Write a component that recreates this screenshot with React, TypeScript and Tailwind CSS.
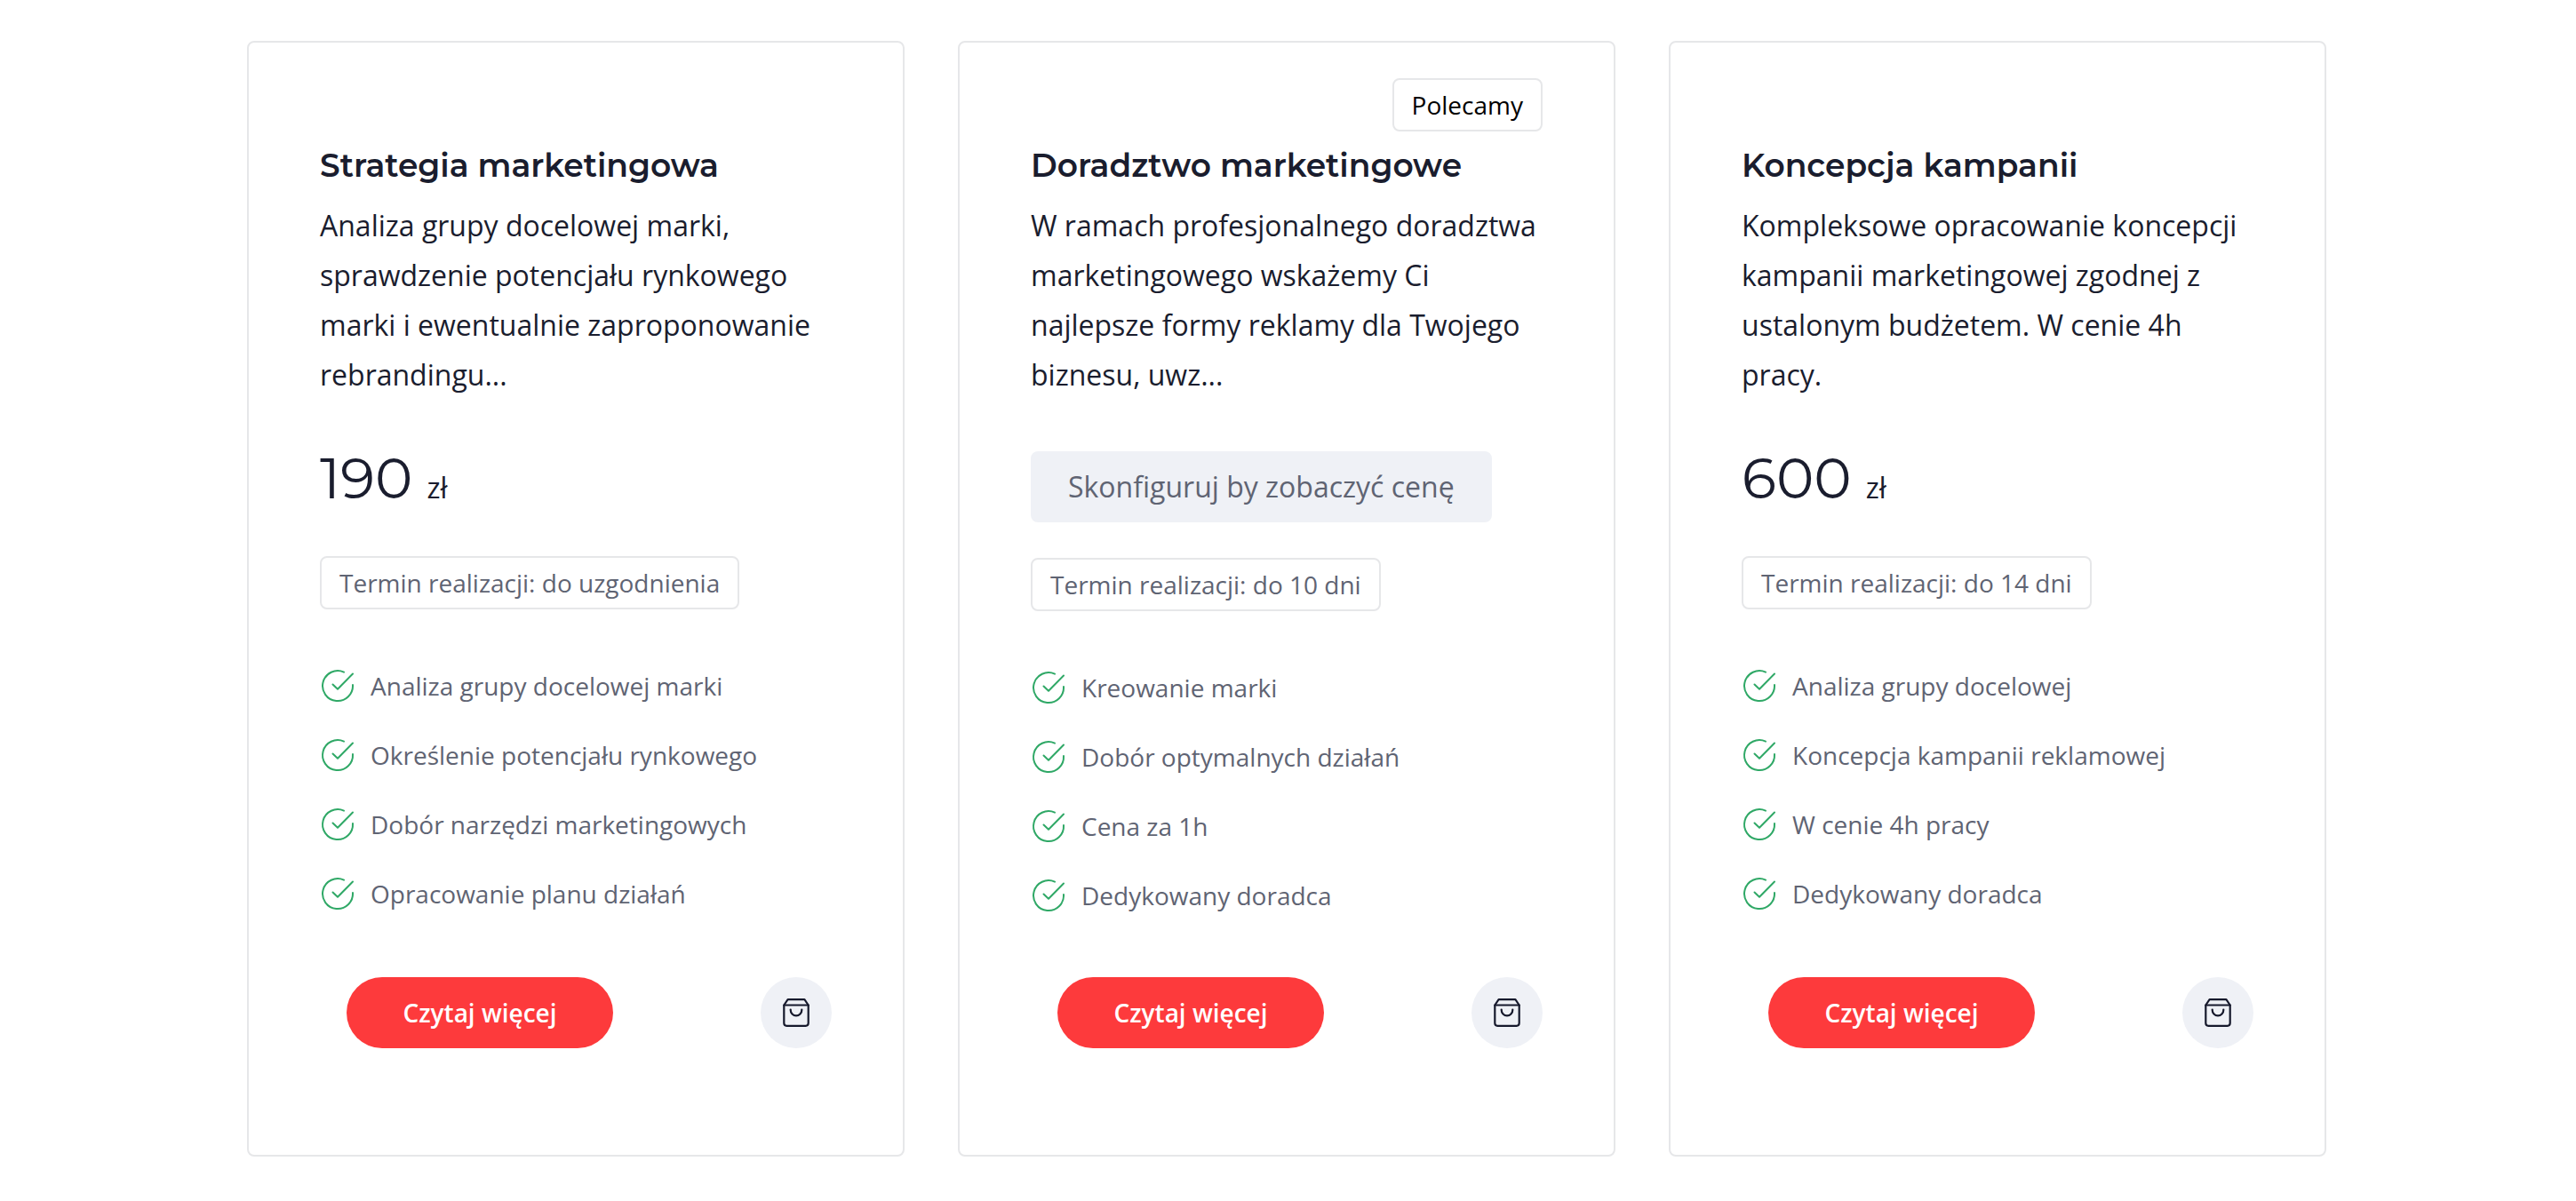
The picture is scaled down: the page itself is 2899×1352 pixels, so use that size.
type Service = {
  title: string;
  description: string;
  price?: string;
  term: string;
  features: string[];
  recommended?: boolean;
};

const services: Service[] = [
  {
    title: 'Strategia marketingowa',
    description:
      'Analiza grupy docelowej marki, sprawdzenie potencjału rynkowego marki i ewentualnie zaproponowanie rebrandingu...',
    price: '190',
    term: 'do uzgodnienia',
    features: [
      'Analiza grupy docelowej marki',
      'Określenie potencjału rynkowego',
      'Dobór narzędzi marketingowych',
      'Opracowanie planu działań',
    ],
  },
  {
    title: 'Doradztwo marketingowe',
    description:
      'W ramach profesjonalnego doradztwa marketingowego wskażemy Ci najlepsze formy reklamy dla Twojego biznesu, uwz...',
    term: 'do 10 dni',
    features: ['Kreowanie marki', 'Dobór optymalnych działań', 'Cena za 1h', 'Dedykowany doradca'],
    recommended: true,
  },
  {
    title: 'Koncepcja kampanii',
    description:
      'Kompleksowe opracowanie koncepcji kampanii marketingowej zgodnej z ustalonym budżetem. W cenie 4h pracy.',
    price: '600',
    term: 'do 14 dni',
    features: [
      'Analiza grupy docelowej',
      'Koncepcja kampanii reklamowej',
      'W cenie 4h pracy',
      'Dedykowany doradca',
    ],
  },
];

function CheckIcon() {
  return (
    <svg
      viewBox="0 0 40 40"
      className="size-10 shrink-0 fill-none stroke-[#2fa866] stroke-2"
      strokeLinecap="round"
      strokeLinejoin="round"
      aria-hidden="true"
    >
      <path d="M27 4.6A17 17 0 1 0 37 19" />
      <path d="M14.5 18.5 20 23.7 37 6.5" />
    </svg>
  );
}

function BagIcon() {
  return (
    <svg
      viewBox="0 0 32 32"
      className="size-8 fill-none stroke-[#16192c] stroke-[2.2]"
      strokeLinecap="round"
      strokeLinejoin="round"
      aria-hidden="true"
    >
      <path d="M2.3 7.5 6.6 1.2h18.8l4.3 6.3V27.8a3 3 0 0 1-3 3H5.3a3 3 0 0 1-3-3z" />
      <path d="M2.3 7.5h27.4" />
      <path d="M9.7 12.5v.6a6.3 6.3 0 0 0 12.6 0v-.6" />
    </svg>
  );
}

function ServiceCard({ service }: { service: Service }) {
  return (
    <article className="relative flex flex-col items-start rounded-lg border-2 border-[#e6e7e9] px-20 pt-[114px] pb-[120px]">
      {service.recommended && (
        <span className="absolute top-10 right-20 rounded-lg border-2 border-[#e6e7e9] px-5 py-2 text-[28px] leading-10 text-black">
          Polecamy
        </span>
      )}
      <h2 className="font-[Montserrat,Inter,sans-serif] text-[36px] leading-12 font-semibold text-[#1a1d2e]">
        {service.title}
      </h2>
      <p className="mt-4 text-[32px] leading-14 text-[#1a1d2e]">{service.description}</p>
      <div className="mt-[58px] flex min-h-[78px]">
        {service.price ? (
          <p className="flex items-baseline gap-4 text-[#1a1d2e]">
            <span className="font-[Montserrat,Inter,sans-serif] text-[64px] leading-15">
              {service.price}
            </span>
            <span className="text-[32px]">zł</span>
          </p>
        ) : (
          <button
            type="button"
            className="rounded-lg border-2 border-[#eff1f6] bg-[#eff1f6] px-10 py-4 text-[32px] leading-11 text-[#5f6473]"
          >
            Skonfiguruj by zobaczyć cenę
          </button>
        )}
      </div>
      <p className="mt-10 rounded-lg border-2 border-[#e6e7e9] px-5 py-2 text-[28px] leading-10 text-[#5f6473]">
        Termin realizacji: {service.term}
      </p>
      <ul className="mt-[66px] mb-[72px] flex flex-col gap-[38px]">
        {service.features.map((feature) => (
          <li key={feature} className="flex items-center gap-[17px] text-[28px] leading-10 text-[#5f6473]">
            <CheckIcon />
            {feature}
          </li>
        ))}
      </ul>
      <div className="mt-auto flex w-full items-center justify-between pl-[30px]">
        <a
          href="#"
          className="flex h-20 w-[300px] items-center justify-center rounded-full bg-[#fd3a3c] text-[28px] font-semibold text-white"
        >
          Czytaj więcej
        </a>
        <button
          type="button"
          aria-label="Dodaj do koszyka"
          className="flex size-20 items-center justify-center rounded-full bg-[#eff1f6]"
        >
          <BagIcon />
        </button>
      </div>
    </article>
  );
}

export default function App() {
  return (
    <main className="bg-white py-[46px] pr-[3px] font-['Open_Sans',sans-serif]">
      <div className="mx-auto grid max-w-[2340px] grid-cols-3 gap-[60px]">
        {services.map((service) => (
          <ServiceCard key={service.title} service={service} />
        ))}
      </div>
    </main>
  );
}
